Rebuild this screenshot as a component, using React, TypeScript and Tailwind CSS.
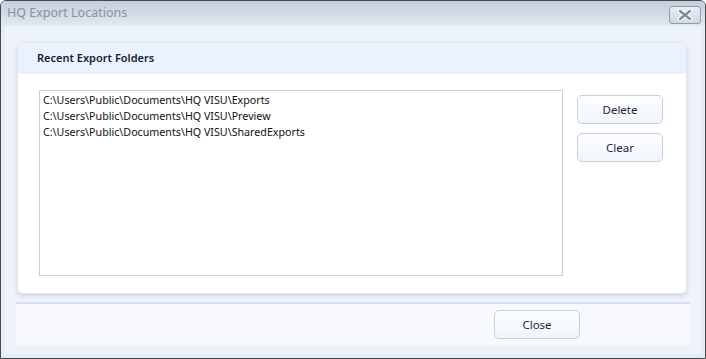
import React from "react";

const font = { fontFamily: '"Noto Sans", "Open Sans", sans-serif' };

function Btn({ label, className = "" }: { label: string; className?: string }) {
  return (
    <button
      className={
        "w-[86px] h-[29px] rounded-[5px] border border-[#c3d0e0] bg-gradient-to-b from-[#fdfeff] to-[#f1f6fc] text-[11.5px] text-[#1e1e3a] flex items-center justify-center " +
        className
      }
    >
      {label}
    </button>
  );
}

export default function App() {
  const items = [
    "C:\\Users\\Public\\Documents\\HQ VISU\\Exports",
    "C:\\Users\\Public\\Documents\\HQ VISU\\Preview",
    "C:\\Users\\Public\\Documents\\HQ VISU\\SharedExports",
  ];
  return (
    <div style={font} className="w-[706px] h-[359px] bg-white">
      <div className="w-[706px] h-[359px] border border-[#474747] rounded-t-[6px] bg-[#eef3f9] flex flex-col overflow-hidden">
        {/* title bar */}
        <div className="h-[25px] shrink-0 bg-gradient-to-b from-[#c4cfdc] to-[#e1e8f0] flex items-center justify-between pl-[6px] pr-[4px]">
          <span className="text-[12.5px] text-[#8a9098]">HQ Export Locations</span>
          <div className="w-[32px] h-[18px] mt-[3px] rounded-[3px] border border-[#8f9cb0] bg-gradient-to-b from-[#e9eef5] to-[#cfd8e4] flex items-center justify-center">
            <svg width="16" height="12" viewBox="0 0 16 12">
              <path d="M3 2 L13 10 M13 2 L3 10" stroke="#ffffff" strokeWidth="4.5" strokeLinecap="round" />
              <path d="M3 2 L13 10 M13 2 L3 10" stroke="#848a93" strokeWidth="2.4" strokeLinecap="round" />
            </svg>
          </div>
        </div>
        {/* client */}
        <div className="flex-1 flex flex-col border-x-[4px] border-b-[4px] border-[#e4ecf5] px-[11px] pt-[16px]">
          {/* card */}
          <div className="h-[252px] ml-[1px] mr-[3px] rounded-[6px] bg-white border border-[#dde6f0] shadow-[0_2px_4px_rgba(160,178,200,0.45)] flex flex-col overflow-hidden">
            <div className="h-[31px] shrink-0 bg-[#eaf3fd] flex items-center pl-[19px]">
              <span className="text-[11px] font-semibold text-[#1a1a2e]">Recent Export Folders</span>
            </div>
            <div className="flex-1 flex pl-[21px] pr-[23px] pt-[16px] pb-[17px] gap-[14px]">
              <div className="flex-1 border border-[#c4d0dd] bg-white pt-[1px] pl-[3px]">
                {items.map((t) => (
                  <div key={t} className="h-[16px] leading-[16px] text-[10.7px] text-[#111]">
                    {t}
                  </div>
                ))}
              </div>
              <div className="flex flex-col gap-[9px] pt-[5px]">
                <Btn label="Delete" />
                <Btn label="Clear" />
              </div>
            </div>
          </div>
          {/* footer */}
          <div className="mt-[8px] h-[43px] border-t-[2px] border-[#d6e0eb] bg-[#f7f9fc] flex items-center justify-end pr-[110px]">
            <Btn label="Close" />
          </div>
        </div>
      </div>
    </div>
  );
}
